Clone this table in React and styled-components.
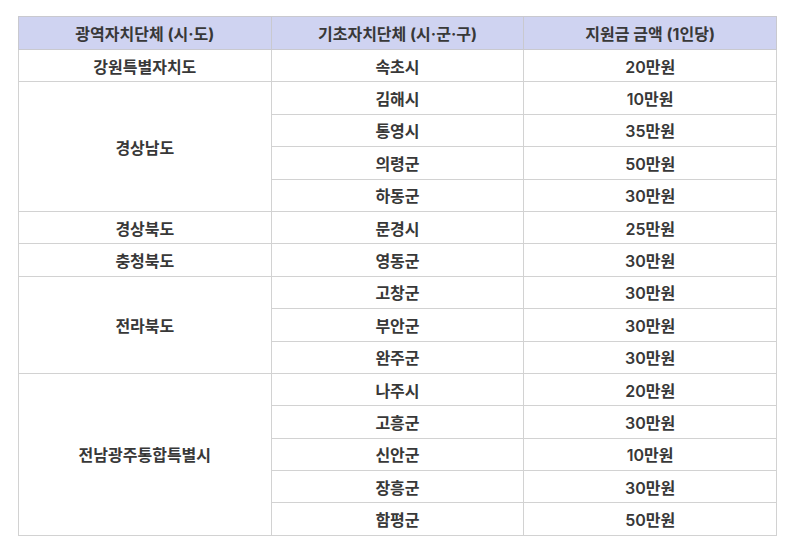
import { createGlobalStyle, styled } from "styled-components";

const GlobalStyle = createGlobalStyle`
  body {
    margin: 0;
    background: #fff;
    font-family: Inter, "Noto Sans CJK KR", sans-serif;
  }
`;

const regions = [
  { name: "강원특별자치도", items: [["속초시", "20만원"]] },
  {
    name: "경상남도",
    items: [
      ["김해시", "10만원"],
      ["통영시", "35만원"],
      ["의령군", "50만원"],
      ["하동군", "30만원"],
    ],
  },
  { name: "경상북도", items: [["문경시", "25만원"]] },
  { name: "충청북도", items: [["영동군", "30만원"]] },
  {
    name: "전라북도",
    items: [
      ["고창군", "30만원"],
      ["부안군", "30만원"],
      ["완주군", "30만원"],
    ],
  },
  {
    name: "전남광주통합특별시",
    items: [
      ["나주시", "20만원"],
      ["고흥군", "30만원"],
      ["신안군", "10만원"],
      ["장흥군", "30만원"],
      ["함평군", "50만원"],
    ],
  },
];

export default function App() {
  return (
    <>
      <GlobalStyle />
      <Page>
        <Table>
          <thead>
            <tr>
              <HeadCell>광역자치단체 (시·도)</HeadCell>
              <HeadCell>기초자치단체 (시·군·구)</HeadCell>
              <HeadCell>지원금 금액 (1인당)</HeadCell>
            </tr>
          </thead>
          <tbody>
            {regions.map((region) =>
              region.items.map(([city, amount], i) => (
                <Row key={city}>
                  {i === 0 && (
                    <Cell rowSpan={region.items.length}>{region.name}</Cell>
                  )}
                  <Cell>{city}</Cell>
                  <Cell>{amount}</Cell>
                </Row>
              ))
            )}
          </tbody>
        </Table>
      </Page>
    </>
  );
}

const Page = styled.div`
  padding: 16px 18px;
`;

const Table = styled.table`
  width: 759px;
  border-collapse: collapse;
  table-layout: fixed;
  color: #383838;
  font-size: 16px;
  font-weight: 600;
`;

const HeadCell = styled.th`
  height: 32px;
  padding: 0;
  background-color: #cfd3f1;
  border: 1px solid #c9c9cf;
  font-weight: 700;
  text-align: center;
  vertical-align: middle;
`;

const Row = styled.tr`
  height: 32.4px;
`;

const Cell = styled.td`
  padding: 0;
  border: 1px solid #d2d2d2;
  text-align: center;
  vertical-align: middle;
`;
